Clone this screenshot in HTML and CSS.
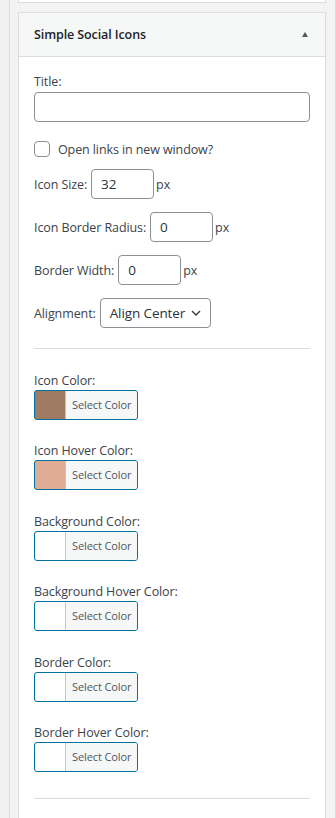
FILE: index.html
```html
<!DOCTYPE html>
<html lang="en">
<head>
  <meta charset="UTF-8" />
  <meta name="viewport" content="width=device-width, initial-scale=1" />
  <title>Widgets</title>
  <link rel="stylesheet" href="styles.css">
</head>
<body>

<div class="sidebar">
  <div class="widget widget-prev"></div>

  <div class="widget">
    <div class="widget-top">
      <h3>Simple Social Icons</h3>
      <span class="toggle-arrow" aria-hidden="true"></span>
    </div>

    <div class="widget-inside">
      <form class="widget-form">
        <div class="field">
          <label for="ssi-title">Title:</label>
          <input type="text" id="ssi-title" class="widefat" />
        </div>

        <label class="check-row">
          <input type="checkbox" class="checkbox" />
          Open links in new window?
        </label>

        <div class="inline-row row-first">
          <label for="ssi-size">Icon Size:</label>
          <input type="text" id="ssi-size" class="small-input" value="32" />
          <span class="unit">px</span>
        </div>

        <div class="inline-row">
          <label for="ssi-radius">Icon Border Radius:</label>
          <input type="text" id="ssi-radius" class="small-input" value="0" />
          <span class="unit">px</span>
        </div>

        <div class="inline-row">
          <label for="ssi-border">Border Width:</label>
          <input type="text" id="ssi-border" class="small-input" value="0" />
          <span class="unit">px</span>
        </div>

        <div class="inline-row">
          <label for="ssi-align">Alignment:</label>
          <div class="select">
            <span>Align Center</span>
            <svg width="10" height="6" viewBox="0 0 10 6"><path d="M1 1l4 4 4-4" fill="none" stroke="#3c434a" stroke-width="1.5"/></svg>
          </div>
        </div>

        <hr class="divider" />

        <div class="color-field first">
          <label>Icon Color:</label>
          <button type="button" class="color-result" style="background-color: #a07b63;"><span class="color-text">Select Color</span></button>
        </div>
        <div class="color-field">
          <label>Icon Hover Color:</label>
          <button type="button" class="color-result" style="background-color: #e1ac94;"><span class="color-text">Select Color</span></button>
        </div>
        <div class="color-field">
          <label>Background Color:</label>
          <button type="button" class="color-result"><span class="color-text">Select Color</span></button>
        </div>
        <div class="color-field">
          <label>Background Hover Color:</label>
          <button type="button" class="color-result"><span class="color-text">Select Color</span></button>
        </div>
        <div class="color-field">
          <label>Border Color:</label>
          <button type="button" class="color-result"><span class="color-text">Select Color</span></button>
        </div>
        <div class="color-field">
          <label>Border Hover Color:</label>
          <button type="button" class="color-result"><span class="color-text">Select Color</span></button>
        </div>

        <hr class="divider divider-bottom" />
      </form>
    </div>
  </div>
</div>

</body>
</html>
```

FILE: styles.css
```css
* {
  margin: 0; padding: 0; box-sizing: border-box;
}
html, body {
  height: 100%;
}
body {
  font-family: 'Segoe UI', 'Open Sans', sans-serif;
  font-size: 12.5px;
  letter-spacing: -0.1px;
  line-height: 19px;
  color: #3c434a;
  background: #f0f0f1;
  padding-left: 9px;
  overflow: hidden;
}

.sidebar {
  height: 100%;
  overflow: hidden;
  border-left: 1px solid #dcdcde;
  border-right: 1px solid #dcdcde;
  padding: 0 9px 0 8px;
  background: #f3f3f4;
}

.widget {
  background: #fff;
  border: 1px solid #dcdcde;
}
.widget-prev {
  height: 3px;
  border-top: none;
  margin-bottom: 9px;
}

/* header */
.widget-top {
  display: flex;
  align-items: center;
  justify-content: space-between;
  height: 44px;
  padding: 0 17px 0 15px;
  background: #f6f7f7;
  border-bottom: 1px solid #dcdcde;
}
.widget-top h3 {
  font-size: 12.5px;
  font-weight: 600;
  color: #1d2327;
}
.toggle-arrow {
  width: 0;
  height: 0;
  border-left: 3.5px solid transparent;
  border-right: 3.5px solid transparent;
  border-bottom: 5px solid #50575e;
  margin-top: -1px;
}

.widget-inside {
  padding: 15px 15px 60px;
}

/* fields */
.field label {
  display: block;
}
input[type="text"] {
  font-family: inherit;
  font-size: 13.5px;
  letter-spacing: inherit;
  color: #2c3338;
  height: 30px;
  padding: 0 9px;
  border: 1px solid #8c8f94;
  border-radius: 4px;
  background: #fff;
  outline: none;
}
.widefat {
  display: block;
  width: 100%;
  margin-top: 1px;
}

.check-row {
  display: flex;
  align-items: center;
  gap: 8px;
  height: 20px;
  margin-top: 17px;
}
.checkbox {
  appearance: none;
  width: 16px;
  height: 16px;
  border: 1px solid #8c8f94;
  border-radius: 4px;
  background: #fff;
}

.inline-row {
  display: flex;
  align-items: center;
  height: 30px;
  margin-top: 13px;
}
.inline-row.row-first {
  margin-top: 10px;
}
.inline-row label {
  margin-right: 4px;
}
.small-input {
  width: 63px;
}
.unit {
  margin-left: 2px;
}

.select {
  display: flex;
  align-items: center;
  justify-content: space-between;
  width: 111px;
  height: 30px;
  padding: 0 9px 0 9px;
  border: 1px solid #8c8f94;
  border-radius: 4px;
  font-size: 13.5px;
  color: #2c3338;
}

.divider {
  border: none;
  border-top: 1px solid #dcdcde;
  margin-top: 20px;
}
.divider-bottom {
  margin-top: 26px;
}

/* color pickers */
.color-field {
  margin-top: 21.4px;
}
.color-field.first {
  margin-top: 22px;
}
.color-field label {
  display: block;
}
.color-result {
  display: block;
  height: 30px;
  padding-left: 30px;
  border: 1px solid #0071a1;
  border-radius: 3px;
  background: #fff;
  font-family: inherit;
  cursor: pointer;
}
.color-text {
  display: block;
  height: 28px;
  line-height: 28px;
  padding: 0 6px;
  font-size: 11px;
  letter-spacing: -0.1px;
  color: #50575e;
  background: #f6f7f7;
  border-left: 1px solid #c3c4c7;
  border-radius: 0 2px 2px 0;
}
```
